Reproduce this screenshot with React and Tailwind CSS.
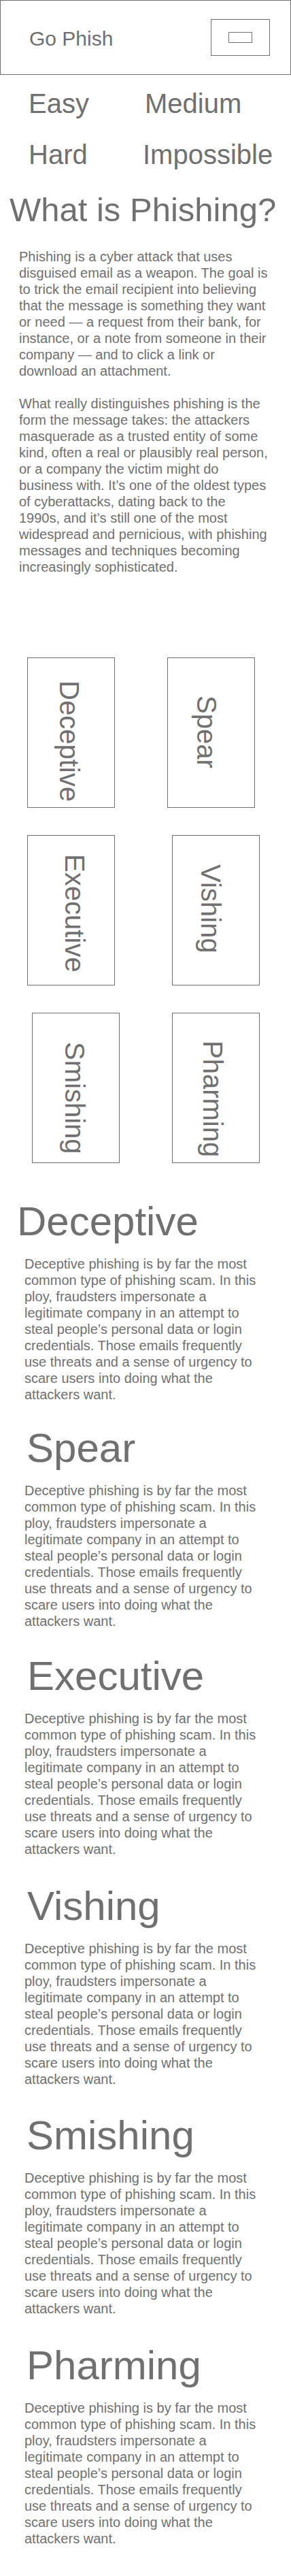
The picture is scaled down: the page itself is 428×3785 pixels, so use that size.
const levels = [
	{ label: "Easy", cls: "" },
	{ label: "Medium", cls: "" },
	{ label: "Hard", cls: "" },
	{ label: "Impossible", cls: "-ml-[3px]" },
];

// card offsets are uneven in the mockup, kept per card
const cards = [
	{ name: "Deceptive", cls: "pl-[38px] pt-[33px]" },
	{ name: "Spear", cls: "pl-[34px] pt-[55px]" },
	{ name: "Executive", cls: "pl-[46px] pt-[27px]" },
	{ name: "Vishing", cls: "ml-[7px] pl-[33px] pt-[42px]" },
	{ name: "Smishing", cls: "ml-[7px] pl-[39px] pt-[42px]" },
	{ name: "Pharming", cls: "ml-[7px] pl-[36px] pt-[40px]" },
];

const sections = [
	{ name: "Deceptive", wrap: "mt-[56px]", head: "pl-[25px]" },
	{ name: "Spear", wrap: "mt-[37px]", head: "pl-[39px]" },
	{ name: "Executive", wrap: "mt-[39px]", head: "pl-[40px]" },
	{ name: "Vishing", wrap: "mt-[42px]", head: "pl-[40px]" },
	{ name: "Smishing", wrap: "mt-[41px]", head: "pl-[39px]" },
	{ name: "Pharming", wrap: "mt-[42px]", head: "pl-[39px]" },
];

const blurb =
	"Deceptive phishing is by far the most common type of phishing scam. In this ploy, fraudsters impersonate a legitimate company in an attempt to steal people’s personal data or login credentials. Those emails frequently use threats and a sense of urgency to scare users into doing what the attackers want.";

export default function App() {
	return (
		<div className="w-[428px] bg-white text-[#707070] font-['Liberation_Sans',Arial,sans-serif] pb-[42px]">
			<header className="h-[110px] border border-[#707070] flex items-center justify-between pl-[42px] pr-[30px]">
				<span className="text-[30px] leading-[34px] pt-[4px]">Go Phish</span>
				<div className="w-[87px] h-[54px] border border-[#707070] flex items-center justify-center">
					<div className="w-[35px] h-[16px] border border-[#707070]" />
				</div>
			</header>

			<div className="grid grid-cols-[171px_1fr] gap-y-[29px] pl-[42px] pt-[19px] text-[40px] leading-[46px]">
				{levels.map((l) => (
					<span key={l.label} className={l.cls}>
						{l.label}
					</span>
				))}
			</div>

			<h1 className="mt-[34px] pl-[14px] text-[49px] leading-[49px] font-normal">
				What is Phishing?
			</h1>

			<div className="mt-[32px] pl-[28px] w-[395px] text-[20px] leading-[24px] flex flex-col gap-6">
				<p>
					Phishing is a cyber attack that uses disguised email as a weapon. The
					goal is to trick the email recipient into believing that the message
					is something they want or need — a request from their bank, for
					instance, or a note from someone in their company — and to click a
					link or download an attachment.
				</p>
				<p>
					What really distinguishes phishing is the form the message takes: the
					attackers masquerade as a trusted entity of some kind, often a real or
					plausibly real person, or a company the victim might do business with.
					It’s one of the oldest types of cyberattacks, dating back to the
					1990s, and it’s still one of the most widespread and pernicious, with
					phishing messages and techniques becoming increasingly sophisticated.
				</p>
			</div>

			<div className="mt-[121px] pl-[40px] grid grid-cols-[129px_129px] gap-x-[77px] gap-y-[40px]">
				{cards.map((c) => (
					<div
						key={c.name}
						className={`w-[129px] h-[221px] border border-[#707070] flex items-start ${c.cls}`}
					>
						<span className="block text-[40px] leading-[46px] whitespace-nowrap [writing-mode:vertical-rl] [text-orientation:sideways]">
							{c.name}
						</span>
					</div>
				))}
			</div>

			{sections.map((s) => (
				<section key={s.name} className={s.wrap}>
					<h2 className={`text-[60px] leading-[60px] font-normal ${s.head}`}>
						{s.name}
					</h2>
					<p className="mt-[20px] pl-[36px] w-[390px] text-[20px] leading-[24px]">
						{blurb}
					</p>
				</section>
			))}
		</div>
	);
}
